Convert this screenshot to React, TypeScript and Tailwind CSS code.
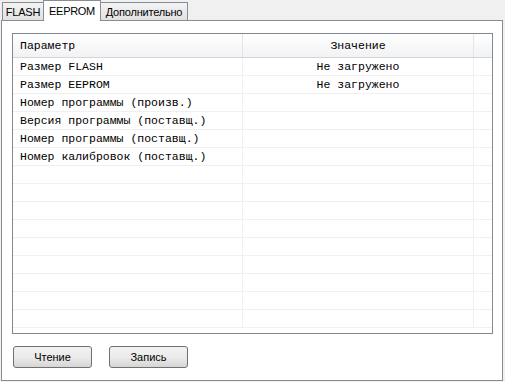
import React from 'react';

const rows: [string, string][] = [
  ['Размер FLASH', 'Не загружено'],
  ['Размер EEPROM', 'Не загружено'],
  ['Номер программы (произв.)', ''],
  ['Версия программы (поставщ.)', ''],
  ['Номер программы (поставщ.)', ''],
  ['Номер калибровок (поставщ.)', ''],
];

const TOTAL_ROWS = 15;

function Tab({ label, width, active }: { label: string; width: string; active?: boolean }) {
  if (active) {
    return (
      <div className={`relative z-10 -mb-px h-[21px] ${width} flex justify-center pt-[3px] bg-white border border-b-0 border-[#898c95] text-[11px] leading-[14px] tracking-[-0.3px] text-black`}>
        {label}
      </div>
    );
  }
  return (
    <div className={`h-[18px] ${width} flex justify-center pt-[2px] bg-gradient-to-b from-[#f3f3f3] to-[#e1e1e1] border border-b-0 border-[#898c95] text-[11px] leading-[14px] tracking-[-0.2px] text-black`}>
      {label}
    </div>
  );
}

function Button({ label }: { label: string }) {
  return (
    <button className="w-[79px] h-[22px] rounded-[3px] border border-[#707070] bg-gradient-to-b from-[#f2f2f2] via-[#ebebeb] to-[#d6d6d6] text-[11px] text-black">
      {label}
    </button>
  );
}

export default function App() {
  const body = Array.from({ length: TOTAL_ROWS }, (_, i) => rows[i] ?? ['', '']);

  return (
    <div className="w-[505px] h-[382px] bg-[#f0f0f0] font-['Tahoma','Liberation_Sans',sans-serif] overflow-hidden">
      {/* вкладки */}
      <div className="flex items-end h-[20px] pl-[2px]">
        <Tab label="FLASH" width="w-[42px]" />
        <div className="-ml-px">
          <Tab label="EEPROM" width="w-[58px]" active />
        </div>
        <div className="-ml-px">
          <Tab label="Дополнительно" width="w-[88px]" />
        </div>
      </div>

      {/* панель */}
      <div className="ml-[1px] w-[502px] h-[361px] bg-white border border-[#898c95] pt-[12px] pl-[10px]">
        <div className="w-[481px] h-[301px] border border-[#828790] overflow-hidden font-['Liberation_Mono','Courier_New',monospace] text-[11.5px] text-black">
          {/* заголовок */}
          <div className="flex h-[24px] bg-gradient-to-b from-white to-[#f1f2f4] border-b border-[#d5d5d5]">
            <div className="w-[230px] pl-[7px] flex items-center border-r border-[#e3e4e6]">Параметр</div>
            <div className="w-[231px] flex items-center justify-center border-r border-[#e3e4e6]">Значение</div>
            <div className="flex-1" />
          </div>
          {/* строки */}
          {body.map(([name, value], i) => (
            <div key={i} className="flex h-[18px] border-b border-[#f0f0f0]">
              <div className="w-[230px] pl-[7px] flex items-center border-r border-[#f0f0f0] whitespace-pre">
                {name}
              </div>
              <div className="w-[231px] flex items-center justify-center border-r border-[#f0f0f0] whitespace-pre">
                {value}
              </div>
              <div className="flex-1" />
            </div>
          ))}
        </div>

        {/* кнопки */}
        <div className="flex gap-[17px] mt-[12px] pl-[1px]">
          <Button label="Чтение" />
          <Button label="Запись" />
        </div>
      </div>
    </div>
  );
}
